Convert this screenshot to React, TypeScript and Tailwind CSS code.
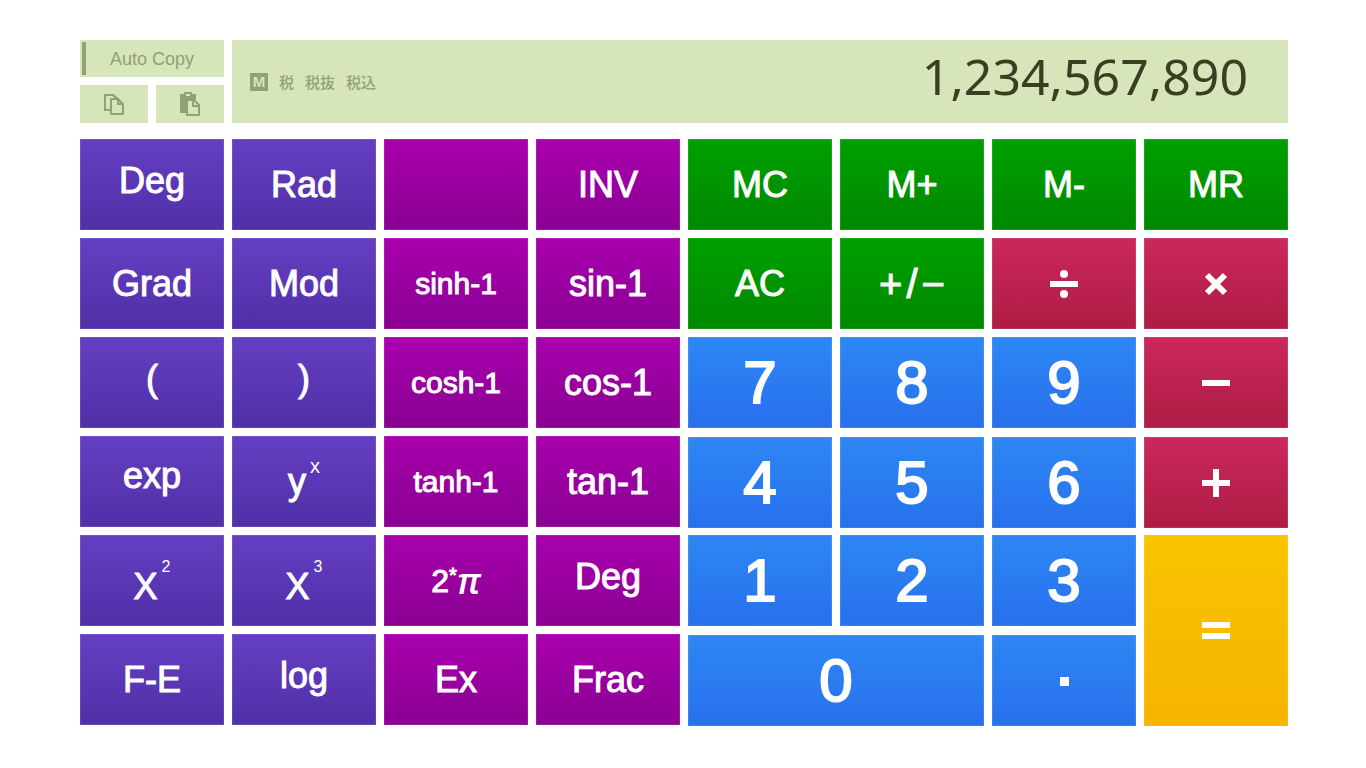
import { useState } from "react";
import type { ReactNode } from "react";

type Tone = "violet" | "magenta" | "green" | "crimson" | "blue" | "yellow";

type Key = {
  id: string;
  tone: Tone;
  label: ReactNode;
  className?: string;
};

const tones: Record<Tone, string> = {
  violet: "from-[#653fc2] to-[#502fa7]",
  magenta: "from-[#a800ad] to-[#8a0092]",
  green: "from-[#00a000] to-[#008800]",
  crimson: "from-[#cb285d] to-[#ae1c43]",
  blue: "from-[#2e87f3] to-[#2870ed]",
  yellow: "from-[#f8c400] to-[#f6b300]",
};

const SMALL = "text-[30px]";
const DIGIT = "text-[60px]";
// labels with descenders sit a little higher on the key
const RAISED = "pb-2";

const Symbol = ({ children }: { children: ReactNode }) => (
  <svg width="28" height="28" viewBox="0 0 28 28" fill="currentColor" aria-hidden="true">
    {children}
  </svg>
);

const Digit = ({ children }: { children: ReactNode }) => (
  <span className="[-webkit-text-stroke:2px_white]">{children}</span>
);

const PowerLabel = ({ power }: { power: string }) => (
  <span className="flex items-start gap-1 leading-none">
    <span className="pt-3">X</span>
    <sup className="static text-base leading-5 [-webkit-text-stroke:0px]">{power}</sup>
  </span>
);

const functionKeys: Key[] = [
  { id: "Degrees", tone: "violet", label: "Deg", className: RAISED },
  { id: "Radians", tone: "violet", label: "Rad" },
  { id: "Blank", tone: "magenta", label: null },
  { id: "Inverse", tone: "magenta", label: "INV" },

  { id: "Gradians", tone: "violet", label: "Grad" },
  { id: "Modulo", tone: "violet", label: "Mod" },
  { id: "sinh-1", tone: "magenta", label: "sinh-1", className: SMALL },
  { id: "sin-1", tone: "magenta", label: "sin-1" },

  { id: "Open bracket", tone: "violet", label: "(", className: RAISED },
  { id: "Close bracket", tone: "violet", label: ")", className: RAISED },
  { id: "cosh-1", tone: "magenta", label: "cosh-1", className: SMALL },
  { id: "cos-1", tone: "magenta", label: "cos-1" },

  { id: "exp", tone: "violet", label: "exp", className: "pb-3" },
  {
    id: "y to the power x",
    tone: "violet",
    label: (
      <span className="flex items-start gap-1 leading-none">
        <span className="py-3">y</span>
        <sup className="static text-xl leading-7 [-webkit-text-stroke:0px]">x</sup>
      </span>
    ),
  },
  { id: "tanh-1", tone: "magenta", label: "tanh-1", className: SMALL },
  { id: "tan-1", tone: "magenta", label: "tan-1" },

  { id: "x squared", tone: "violet", label: <PowerLabel power="2" /> },
  { id: "x cubed", tone: "violet", label: <PowerLabel power="3" /> },
  {
    id: "2 pi",
    tone: "magenta",
    label: (
      <span className="flex items-start text-[32px] leading-9">
        <span>2</span>
        <span className="text-xl leading-6">*</span>
        <span className="font-['Open_Sans',sans-serif] text-4xl leading-9 font-semibold italic [-webkit-text-stroke:0px]">π</span>
      </span>
    ),
  },
  { id: "To degrees", tone: "magenta", label: "Deg", className: RAISED },

  { id: "F-E", tone: "violet", label: "F-E" },
  { id: "log", tone: "violet", label: "log", className: RAISED },
  { id: "Ex", tone: "magenta", label: "Ex" },
  { id: "Frac", tone: "magenta", label: "Frac" },
];

const numberKeys: Key[] = [
  { id: "MC", tone: "green", label: "MC" },
  { id: "M+", tone: "green", label: "M+" },
  { id: "M-", tone: "green", label: "M-" },
  { id: "MR", tone: "green", label: "MR" },

  { id: "AC", tone: "green", label: "AC" },
  {
    id: "Plus minus",
    tone: "green",
    label: (
      <span className="flex gap-1 text-[40px] leading-none">
        <span>+</span>
        <span>/</span>
        <span>−</span>
      </span>
    ),
  },
  {
    id: "Divide",
    tone: "crimson",
    label: (
      <Symbol>
        <path d="M0 11h28v6H0z" />
        <circle cx="14" cy="4" r="4" />
        <circle cx="14" cy="24" r="4" />
      </Symbol>
    ),
  },
  {
    id: "Multiply",
    tone: "crimson",
    label: (
      <Symbol>
        <path d="M5 5 23 23M23 5 5 23" stroke="currentColor" strokeWidth="6" />
      </Symbol>
    ),
  },

  { id: "7", tone: "blue", label: <Digit>7</Digit>, className: DIGIT },
  { id: "8", tone: "blue", label: <Digit>8</Digit>, className: DIGIT },
  { id: "9", tone: "blue", label: <Digit>9</Digit>, className: DIGIT },
  {
    id: "Subtract",
    tone: "crimson",
    label: (
      <Symbol>
        <path d="M0 11h28v6H0z" />
      </Symbol>
    ),
  },

  { id: "4", tone: "blue", label: <Digit>4</Digit>, className: DIGIT },
  { id: "5", tone: "blue", label: <Digit>5</Digit>, className: DIGIT },
  { id: "6", tone: "blue", label: <Digit>6</Digit>, className: DIGIT },
  {
    id: "Add",
    tone: "crimson",
    label: (
      <Symbol>
        <path d="M0 11h28v6H0zM11 0h6v28h-6z" />
      </Symbol>
    ),
  },

  { id: "1", tone: "blue", label: <Digit>1</Digit>, className: DIGIT },
  { id: "2", tone: "blue", label: <Digit>2</Digit>, className: DIGIT },
  { id: "3", tone: "blue", label: <Digit>3</Digit>, className: DIGIT },
  {
    id: "Equals",
    tone: "yellow",
    className: "row-span-2 h-full",
    label: (
      <Symbol>
        <path d="M0 5h28v6H0zM0 16h28v6H0z" />
      </Symbol>
    ),
  },

  { id: "0", tone: "blue", label: <Digit>0</Digit>, className: "col-span-2 text-[60px]" },
  {
    id: "Decimal point",
    tone: "blue",
    label: (
      <Symbol>
        <path d="M10 10h9v9h-9z" />
      </Symbol>
    ),
  },
];

const KeyButton = ({ id, tone, label, className = "" }: Key) => {
  const size = className.includes("text-[") ? "" : "text-4xl";
  const height = className.includes("h-full") ? "" : "h-[91px]";
  return (
    <button
      type="button"
      aria-label={id}
      className={`flex items-center justify-center bg-linear-to-b leading-none text-white inset-ring inset-ring-white/10 [-webkit-text-stroke:1px_white] hover:brightness-110 ${size} ${height} ${tones[tone]} ${className}`}
    >
      {label}
    </button>
  );
};

const CopyIcon = () => (
  <svg width="24" height="24" viewBox="0 0 24 24" fill="none" stroke="currentColor" strokeWidth="2" aria-hidden="true">
    <path d="M8 18H3V3h8l3 3" />
    <path d="M9 7h7l5 5v10H9z" strokeLinejoin="round" />
    <path d="M16 7v5h5" />
    <path d="M11 3l6 5" />
  </svg>
);

const PasteIcon = () => (
  <svg width="24" height="24" viewBox="0 0 24 24" aria-hidden="true">
    <path
      d="M3 2h3V1q0-1 1-1h6q1 0 1 1v1h3q1 0 1 1v5h-9q-1 0-1 1v12H3q-1 0-1-1V3q0-1 1-1zM8 2v2h4V2z"
      fill="currentColor"
      fillRule="evenodd"
    />
    <g fill="none" stroke="currentColor" strokeWidth="2">
      <path d="M9 8h7l5 5v10H9z" strokeLinejoin="round" />
      <path d="M15 8v6h6" />
    </g>
  </svg>
);

export default function App() {
  const [autoCopy, setAutoCopy] = useState(true);

  return (
    <main className="min-h-screen bg-white pt-10 pr-[78px] pb-10 pl-20 font-['Liberation_Sans',Arial,sans-serif]">
      <header className="grid grid-cols-8 gap-2 text-[#91a176]">
        <div className="flex flex-col gap-2">
          <button
            type="button"
            aria-pressed={autoCopy}
            onClick={() => setAutoCopy(!autoCopy)}
            className="flex h-[37px] items-stretch bg-[#d7e5ba] p-0.5 text-lg"
          >
            <span className={autoCopy ? "w-1 bg-[#91a176]" : "w-1"} />
            <span className="flex-1 self-center pr-1">Auto Copy</span>
          </button>
          <div className="grid grid-cols-2 gap-2">
            <button type="button" aria-label="Copy" className="flex h-[38px] items-center justify-center bg-[#d7e5ba]">
              <CopyIcon />
            </button>
            <button type="button" aria-label="Paste" className="flex h-[38px] items-center justify-center bg-[#d7e5ba]">
              <PasteIcon />
            </button>
          </div>
        </div>

        <div className="col-span-7 flex items-center justify-between bg-[#d7e5ba] pr-10 pl-[18px]">
          <div className="flex items-center gap-[11px] font-['Noto_Sans_CJK_JP',sans-serif] text-[15px] leading-5 font-medium">
            <span className="flex size-[18px] items-center justify-center bg-[#91a176] font-['Liberation_Sans',sans-serif] font-bold text-[#d7e5ba]">
              M
            </span>
            <span>税</span>
            <span>税抜</span>
            <span>税込</span>
          </div>
          <output className="pb-3 font-['Noto_Sans',sans-serif] text-[50px] leading-none text-[#364121]">
            1,234,567,890
          </output>
        </div>
      </header>

      <section aria-label="Keypad" className="mt-4 grid grid-cols-2 gap-2">
        <div className="grid auto-rows-[91px] grid-cols-4 gap-2">
          {functionKeys.map((key) => (
            <KeyButton key={key.id} {...key} />
          ))}
        </div>
        <div className="grid grid-cols-4 grid-rows-[91px_91px_92px_90px_92px_91px] gap-2">
          {numberKeys.map((key) => (
            <KeyButton key={key.id} {...key} />
          ))}
        </div>
      </section>
    </main>
  );
}
